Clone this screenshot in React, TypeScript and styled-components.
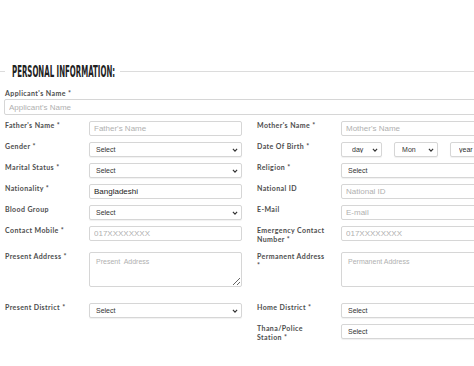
import React from "react";
import styled, { createGlobalStyle } from "styled-components";

const GlobalStyle = createGlobalStyle`
  html, body {
    margin: 0;
    padding: 0;
    background: #ffffff;
    overflow: hidden;
  }
  body {
    font-family: "Liberation Sans", Arial, sans-serif;
  }
`;

type FieldDef = {
  label: string;
  kind: "input" | "select" | "textarea" | "date" | "none";
  placeholder?: string;
  value?: string;
};

type RowDef = { left: FieldDef; right: FieldDef; space?: number };

const rows: RowDef[] = [
  {
    left: { label: "Father's Name *", kind: "input", placeholder: "Father's Name" },
    right: { label: "Mother's Name *", kind: "input", placeholder: "Mother's Name" },
  },
  {
    left: { label: "Gender *", kind: "select" },
    right: { label: "Date Of Birth *", kind: "date" },
  },
  {
    left: { label: "Marital Status *", kind: "select" },
    right: { label: "Religion *", kind: "select" },
  },
  {
    left: { label: "Nationality *", kind: "input", value: "Bangladeshi" },
    right: { label: "National ID", kind: "input", placeholder: "National ID" },
  },
  {
    left: { label: "Blood Group", kind: "select" },
    right: { label: "E-Mail", kind: "input", placeholder: "E-mail" },
  },
  {
    left: { label: "Contact Mobile *", kind: "input", placeholder: "017XXXXXXXX" },
    right: { label: "Emergency Contact Number *", kind: "input", placeholder: "017XXXXXXXX" },
    space: 8,
  },
  {
    left: { label: "Present Address *", kind: "textarea", placeholder: "Present  Address" },
    right: { label: "Permanent Address *", kind: "textarea", placeholder: "Permanent Address" },
    space: 16,
  },
  {
    left: { label: "Present District *", kind: "select" },
    right: { label: "Home District *", kind: "select" },
  },
  {
    left: { label: "", kind: "none" },
    right: { label: "Thana/Police Station *", kind: "select" },
  },
];

const Chevron = () => (
  <ChevronIcon viewBox="0 0 10 10" width="6" height="6">
    <path d="M1.5 3.2 L5 6.8 L8.5 3.2" fill="none" stroke="#333" strokeWidth="2" />
  </ChevronIcon>
);

const SelectBox = ({ text, width, inset }: { text: string; width?: number; inset?: number }) => (
  <SelectWrap width={width}>
    <NativeSelect defaultValue={text} inset={inset}>
      <option>{text}</option>
    </NativeSelect>
    <Chevron />
  </SelectWrap>
);

const Control = ({ field }: { field: FieldDef }) => {
  if (field.kind === "select") return <SelectBox text="Select" />;
  if (field.kind === "textarea") return <Area placeholder={field.placeholder} />;
  if (field.kind === "date")
    return (
      <DateGroup>
        <SelectBox text="day" width={42} inset={10} />
        <SelectBox text="Mon" width={45} inset={7} />
        <SelectBox text="year" width={45} inset={8} />
      </DateGroup>
    );
  if (field.kind === "input")
    return <TextInput placeholder={field.placeholder} defaultValue={field.value} />;
  return null;
};

const App = () => {
  return (
    <>
      <GlobalStyle />
      <Page>
        <SectionTitle>
          <Rule width={5} />
          <TitleBox>
            <TitleText>PERSONAL INFORMATION:</TitleText>
          </TitleBox>
          <Rule />
        </SectionTitle>
        <FullField>
          <Label>Applicant's Name *</Label>
          <WideInput placeholder="Applicant's Name" />
        </FullField>
        {rows.map((row, i) => (
          <Row key={i} space={row.space}>
            <Field>
              <Label>{row.left.label}</Label>
              <Control field={row.left} />
            </Field>
            <Field>
              <Label>{row.right.label}</Label>
              <Control field={row.right} />
            </Field>
          </Row>
        ))}
      </Page>
    </>
  );
};

const Page = styled.div`
  width: 494px;
  padding-top: 63px;
`;

const SectionTitle = styled.div`
  display: flex;
  align-items: center;
  gap: 7px;
  height: 16px;
`;

const Rule = styled.div<{ width?: number }>`
  height: 1px;
  background: #dcdcdc;
  ${(p) => (p.width ? `width: ${p.width}px;` : "flex: 1;")}
`;

const TitleBox = styled.div`
  width: 101px;
  height: 16px;
  white-space: nowrap;
`;

const TitleText = styled.span`
  display: inline-block;
  font-family: "DejaVu Sans Condensed", "DejaVu Sans", sans-serif;
  font-stretch: condensed;
  font-weight: bold;
  font-size: 15px;
  line-height: 16px;
  color: #222;
  transform: scaleX(0.52);
  transform-origin: left center;
`;

const FullField = styled.div`
  padding: 10px 0 0 4px;
  margin-bottom: 6px;
`;

const Label = styled.div`
  font-family: Lato, "Open Sans", sans-serif;
  font-weight: bold;
  font-size: 7px;
  line-height: 9px;
  letter-spacing: 0.4px;
  color: #4d4d4d;
  padding-right: 16px;
  ${FullField} & {
    margin-bottom: 1px;
    padding-left: 1px;
  }
`;

const Row = styled.div<{ space?: number }>`
  display: flex;
  gap: 15px;
  padding-left: 5px;
  margin-bottom: ${(p) => p.space ?? 6}px;
`;

const Field = styled.div`
  display: grid;
  grid-template-columns: 84px 153px;
  align-items: start;
`;

const baseBox = `
  display: block;
  box-sizing: border-box;
  border: 1px solid #d6d6d6;
  border-radius: 2px;
  background: #fff;
  font-family: "Liberation Sans", Arial, sans-serif;
  outline: none;
  margin: 0;
`;

const TextInput = styled.input`
  ${baseBox}
  width: 153px;
  height: 15px;
  padding: 0 4px;
  font-size: 8px;
  color: #222;
  &::placeholder {
    color: #b0b0b0;
  }
`;

const WideInput = styled(TextInput)`
  width: 490px;
  height: 16px;
`;

const Area = styled.textarea`
  ${baseBox}
  width: 153px;
  height: 35px;
  padding: 5px 6px;
  font-size: 7px;
  resize: vertical;
  &::placeholder {
    color: #b0b0b0;
  }
`;

const SelectWrap = styled.div<{ width?: number }>`
  position: relative;
  width: ${(p) => p.width ?? 153}px;
  height: 15px;
`;

const NativeSelect = styled.select<{ inset?: number }>`
  ${baseBox}
  appearance: none;
  width: 100%;
  height: 15px;
  padding: 0 4px 0 ${(p) => p.inset ?? 6}px;
  font-size: 7px;
  color: #333;
  box-shadow: 0 1px 1px rgba(0, 0, 0, 0.06);
`;

const ChevronIcon = styled.svg`
  position: absolute;
  right: 4px;
  top: 5px;
  pointer-events: none;
`;

const DateGroup = styled.div`
  display: flex;
  gap: 12px;
`;

export default App;
